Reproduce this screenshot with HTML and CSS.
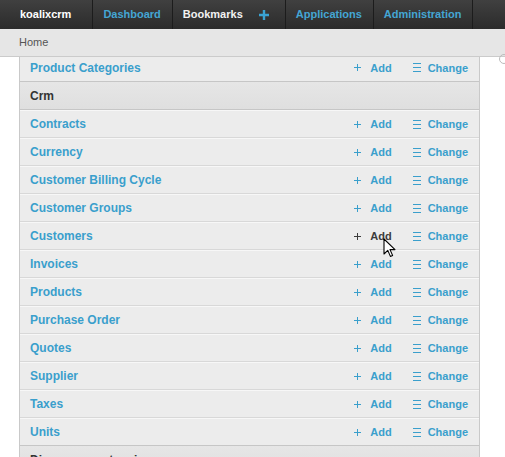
FILE: index.html
```html
<!DOCTYPE html>
<html>
<head>
<meta charset="utf-8">
<link rel="stylesheet" href="styles.css">
</head>
<body>
<header class="topnav">
  <div class="brand">koalixcrm</div>
  <a class="nav-item active">Dashboard</a>
  <div class="nav-item">Bookmarks<svg class="nav-plus" width="10" height="10" viewBox="0 0 10 10"><path d="M5 0V10M0 5H10" stroke="#3aa3d4" stroke-width="2.4"/></svg></div>
  <a class="nav-item active">Applications</a>
  <a class="nav-item active">Administration</a>
</header>
<div class="breadcrumbs">Home</div>
<main class="content">
  <span class="corner"></span>
  <div class="panel">
    <div class="row cut last"><a class="name">Product Categories</a>
      <div class="actions">
        <a class="act"><svg class="ic" width="7" height="7" viewBox="0 0 7 7"><path d="M3.5 0V7M0 3.5H7" stroke="currentColor" stroke-width="1"/></svg>Add</a>
        <a class="act chg"><svg class="ic" width="8" height="9" viewBox="0 0 8 9"><path d="M0 0.5H8M0 4.5H8M0 8.5H8" stroke="currentColor" stroke-width="1"/></svg>Change</a>
      </div>
    </div>
    <div class="caption">Crm</div>
    <div class="row"><a class="name">Contracts</a><div class="actions"><a class="act"><svg class="ic" width="7" height="7" viewBox="0 0 7 7"><path d="M3.5 0V7M0 3.5H7" stroke="currentColor"/></svg>Add</a><a class="act chg"><svg class="ic" width="8" height="9" viewBox="0 0 8 9"><path d="M0 0.5H8M0 4.5H8M0 8.5H8" stroke="currentColor"/></svg>Change</a></div></div>
    <div class="row"><a class="name">Currency</a><div class="actions"><a class="act"><svg class="ic" width="7" height="7" viewBox="0 0 7 7"><path d="M3.5 0V7M0 3.5H7" stroke="currentColor"/></svg>Add</a><a class="act chg"><svg class="ic" width="8" height="9" viewBox="0 0 8 9"><path d="M0 0.5H8M0 4.5H8M0 8.5H8" stroke="currentColor"/></svg>Change</a></div></div>
    <div class="row"><a class="name">Customer Billing Cycle</a><div class="actions"><a class="act"><svg class="ic" width="7" height="7" viewBox="0 0 7 7"><path d="M3.5 0V7M0 3.5H7" stroke="currentColor"/></svg>Add</a><a class="act chg"><svg class="ic" width="8" height="9" viewBox="0 0 8 9"><path d="M0 0.5H8M0 4.5H8M0 8.5H8" stroke="currentColor"/></svg>Change</a></div></div>
    <div class="row"><a class="name">Customer Groups</a><div class="actions"><a class="act"><svg class="ic" width="7" height="7" viewBox="0 0 7 7"><path d="M3.5 0V7M0 3.5H7" stroke="currentColor"/></svg>Add</a><a class="act chg"><svg class="ic" width="8" height="9" viewBox="0 0 8 9"><path d="M0 0.5H8M0 4.5H8M0 8.5H8" stroke="currentColor"/></svg>Change</a></div></div>
    <div class="row"><a class="name">Customers</a><div class="actions"><a class="act hover"><svg class="ic" width="7" height="7" viewBox="0 0 7 7"><path d="M3.5 0V7M0 3.5H7" stroke="currentColor"/></svg>Add<svg class="cursor" width="13" height="20" viewBox="0 0 13 20"><path d="M1 1V16L4.8 12.4L7.4 18.4L9.6 17.4L7 11.6H12Z" fill="#fff" stroke="#000" stroke-width="1.1" stroke-linejoin="round"/></svg></a><a class="act chg"><svg class="ic" width="8" height="9" viewBox="0 0 8 9"><path d="M0 0.5H8M0 4.5H8M0 8.5H8" stroke="currentColor"/></svg>Change</a></div></div>
    <div class="row"><a class="name">Invoices</a><div class="actions"><a class="act"><svg class="ic" width="7" height="7" viewBox="0 0 7 7"><path d="M3.5 0V7M0 3.5H7" stroke="currentColor"/></svg>Add</a><a class="act chg"><svg class="ic" width="8" height="9" viewBox="0 0 8 9"><path d="M0 0.5H8M0 4.5H8M0 8.5H8" stroke="currentColor"/></svg>Change</a></div></div>
    <div class="row"><a class="name">Products</a><div class="actions"><a class="act"><svg class="ic" width="7" height="7" viewBox="0 0 7 7"><path d="M3.5 0V7M0 3.5H7" stroke="currentColor"/></svg>Add</a><a class="act chg"><svg class="ic" width="8" height="9" viewBox="0 0 8 9"><path d="M0 0.5H8M0 4.5H8M0 8.5H8" stroke="currentColor"/></svg>Change</a></div></div>
    <div class="row"><a class="name">Purchase Order</a><div class="actions"><a class="act"><svg class="ic" width="7" height="7" viewBox="0 0 7 7"><path d="M3.5 0V7M0 3.5H7" stroke="currentColor"/></svg>Add</a><a class="act chg"><svg class="ic" width="8" height="9" viewBox="0 0 8 9"><path d="M0 0.5H8M0 4.5H8M0 8.5H8" stroke="currentColor"/></svg>Change</a></div></div>
    <div class="row"><a class="name">Quotes</a><div class="actions"><a class="act"><svg class="ic" width="7" height="7" viewBox="0 0 7 7"><path d="M3.5 0V7M0 3.5H7" stroke="currentColor"/></svg>Add</a><a class="act chg"><svg class="ic" width="8" height="9" viewBox="0 0 8 9"><path d="M0 0.5H8M0 4.5H8M0 8.5H8" stroke="currentColor"/></svg>Change</a></div></div>
    <div class="row"><a class="name">Supplier</a><div class="actions"><a class="act"><svg class="ic" width="7" height="7" viewBox="0 0 7 7"><path d="M3.5 0V7M0 3.5H7" stroke="currentColor"/></svg>Add</a><a class="act chg"><svg class="ic" width="8" height="9" viewBox="0 0 8 9"><path d="M0 0.5H8M0 4.5H8M0 8.5H8" stroke="currentColor"/></svg>Change</a></div></div>
    <div class="row"><a class="name">Taxes</a><div class="actions"><a class="act"><svg class="ic" width="7" height="7" viewBox="0 0 7 7"><path d="M3.5 0V7M0 3.5H7" stroke="currentColor"/></svg>Add</a><a class="act chg"><svg class="ic" width="8" height="9" viewBox="0 0 8 9"><path d="M0 0.5H8M0 4.5H8M0 8.5H8" stroke="currentColor"/></svg>Change</a></div></div>
    <div class="row last"><a class="name">Units</a><div class="actions"><a class="act"><svg class="ic" width="7" height="7" viewBox="0 0 7 7"><path d="M3.5 0V7M0 3.5H7" stroke="currentColor"/></svg>Add</a><a class="act chg"><svg class="ic" width="8" height="9" viewBox="0 0 8 9"><path d="M0 0.5H8M0 4.5H8M0 8.5H8" stroke="currentColor"/></svg>Change</a></div></div>
    <div class="caption">Djangouserextension</div>
  </div>
</main>
</body>
</html>
```

FILE: styles.css
```css
* { box-sizing: border-box; }
html, body { margin: 0; padding: 0; }
body {
  width: 505px;
  height: 457px;
  overflow: hidden;
  background: #fff;
  font-family: "Liberation Sans", Arial, sans-serif;
  color: #333;
}
a { text-decoration: none; cursor: pointer; }

.topnav {
  display: flex;
  height: 29px;
  background: linear-gradient(#404040, #2b2b2b);
  font-size: 11px;
  font-weight: bold;
  line-height: 29px;
}
.brand {
  color: #fff;
  padding: 0 21px 0 20px;
  border-right: 1px solid #1c1c1c;
}
.nav-item {
  display: flex;
  align-items: center;
  color: #f2f2f2;
  padding: 0 11px 0 10px;
  border-right: 1px solid #1c1c1c;
}
.nav-item.active { color: #44a6d4; }
.nav-plus { margin-left: 16px; margin-right: 5px; }

.breadcrumbs {
  height: 28px;
  background: #e6e6e6;
  border-bottom: 1px solid #cbcbcb;
  padding-left: 19px;
  font-size: 11px;
  line-height: 27px;
  color: #555;
}

.content { position: relative; }
.corner {
  position: absolute;
  left: 499px;
  top: -3px;
  width: 10px;
  height: 10px;
  border: 1px solid #bbb;
  border-radius: 50%;
}

.panel {
  margin-left: 19px;
  width: 461px;
  border-left: 1px solid #c9c9c9;
  border-right: 1px solid #c9c9c9;
}

.row {
  display: flex;
  align-items: center;
  height: 28px;
  padding: 0 11px 0 10px;
  background: #ececec;
  border-top: 1px solid #f7f7f7;
  border-bottom: 1px solid #d8d8d8;
}
.row.cut { height: 25px; border-top: 0; padding-bottom: 3px; }
.row.last { border-bottom-color: #c6c6c6; }

.name {
  flex: 1;
  color: #3a9fcc;
  font-size: 12px;
  font-weight: bold;
}

.caption {
  height: 28px;
  padding: 0 10px;
  background: linear-gradient(#e6e6e6, #dfdfdf);
  border-bottom: 1px solid #c6c6c6;
  font-size: 12px;
  font-weight: bold;
  line-height: 28px;
  color: #333;
}

.actions {
  display: flex;
  align-items: center;
  font-size: 11px;
  font-weight: bold;
}
.act {
  position: relative;
  display: flex;
  align-items: center;
  color: #3a9fcc;
}
.act .ic { margin-right: 9px; }
.act.chg { margin-left: 21px; }
.act.chg .ic { margin-right: 7px; }
.act.hover { color: #3c3c3c; }
.cursor {
  position: absolute;
  left: 29px;
  top: 8px;
}
```
